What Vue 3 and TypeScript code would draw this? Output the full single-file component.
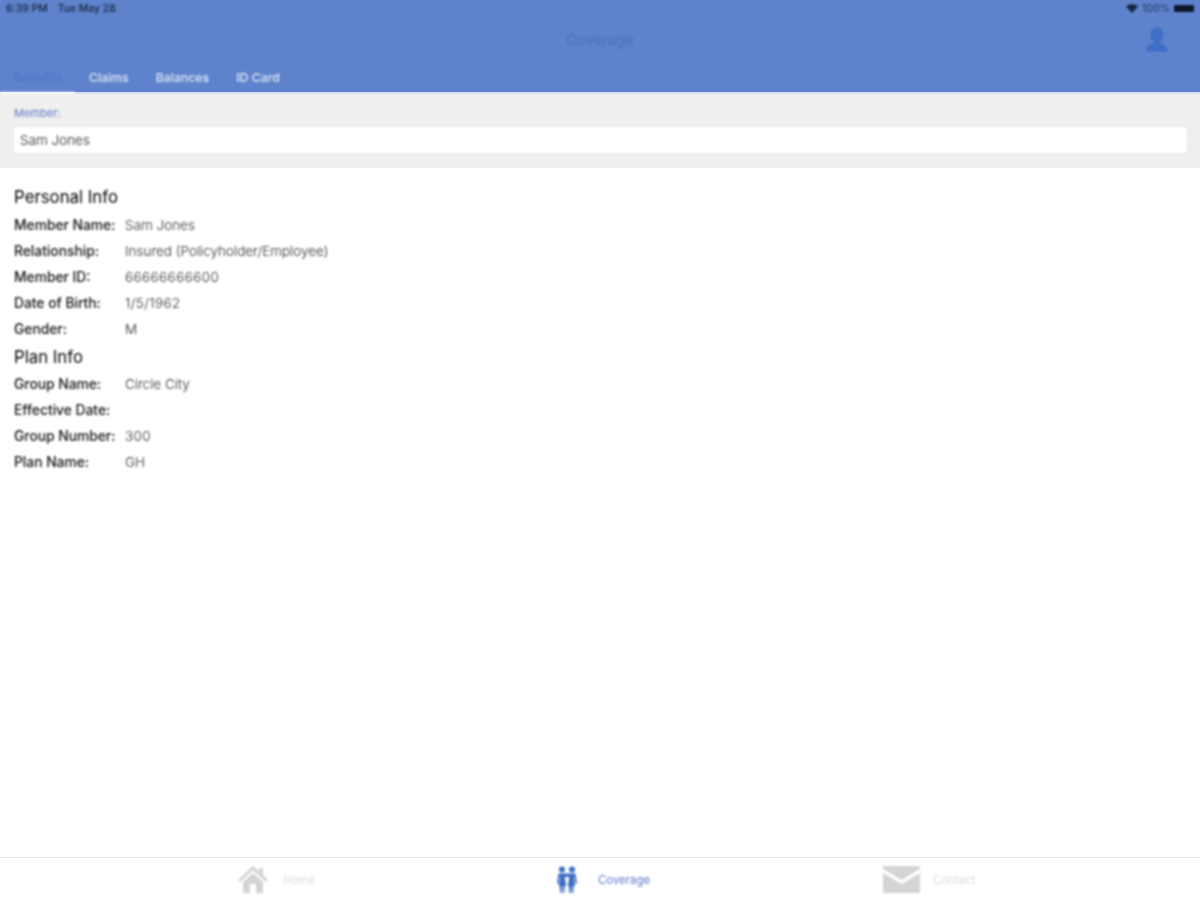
<script setup lang="ts">
interface Row { label: string; value: string; numeric?: boolean }
interface Section { title: string; rows: Row[] }

const tabs: string[] = ['Benefits', 'Claims', 'Balances', 'ID Card']
const sections: Section[] = [
  {
    title: 'Personal Info',
    rows: [
      { label: 'Member Name:', value: 'Sam Jones' },
      { label: 'Relationship:', value: 'Insured (Policyholder/Employee)' },
      { label: 'Member ID:', value: '66666666600', numeric: true },
      { label: 'Date of Birth:', value: '1/5/1962', numeric: true },
      { label: 'Gender:', value: 'M' }
    ]
  },
  {
    title: 'Plan Info',
    rows: [
      { label: 'Group Name:', value: 'Circle City' },
      { label: 'Effective Date:', value: '' },
      { label: 'Group Number:', value: '300', numeric: true },
      { label: 'Plan Name:', value: 'GH' }
    ]
  }
]
</script>

<template>
  <div class="page">
    <header class="header">
      <div class="status soft">
        <div class="status-left"><span>6:39 PM</span><span>Tue May 28</span></div>
        <div class="status-right">
          <svg width="12" height="9" viewBox="0 0 12 9"><path d="M0 2.600C3.400-.5 8.600-.5 12 2.600L6 9z" fill="#16243f" /></svg>
          <span>100%</span>
          <span class="battery"></span>
        </div>
      </div>
      <div class="titlebar">
        <span class="title soft">Coverage</span>
        <svg class="person soft" width="24" height="27" viewBox="0 0 26 28">
          <ellipse cx="13" cy="9" rx="7" ry="8.500" fill="#3f6ec6" />
          <path d="M1.500 27c0-6 4-8 8.500-9.500h6c4.500 1.500 8.500 3.500 8.500 9.500z" fill="#3f6ec6" />
        </svg>
      </div>
      <nav class="tabs">
        <span v-for="(tab, i) in tabs" :key="tab" class="tab soft" :class="{ active: i === 0 }">{{ tab }}</span>
      </nav>
    </header>

    <section class="member">
      <label class="member-label soft">Member:</label>
      <div class="member-input soft">Sam Jones</div>
    </section>

    <main class="content soft">
      <div v-for="section in sections" :key="section.title" class="info">
        <h2 class="section-title">{{ section.title }}</h2>
        <div v-for="row in section.rows" :key="row.label" class="row">
          <span class="row-label">{{ row.label }}</span>
          <span class="row-value" :class="{ numeric: row.numeric }">{{ row.value }}</span>
        </div>
      </div>
    </main>

    <footer class="tabbar">
      <div class="tabbar-item home soft">
        <svg width="30" height="27" viewBox="0 0 30 27">
          <path fill="#d4d4d4" d="M15 0 21 5V2h4v7l5 5-2 2L15 4 2 16l-2-2zM5 16 15 7l10 9v11h-7v-9h-6v9H5z" />
        </svg>
        <span class="tabbar-label">Home</span>
      </div>
      <div class="tabbar-item current soft">
        <svg width="20" height="27" viewBox="0 0 20 27">
          <g fill="#3c6cc4">
            <circle cx="5" cy="3.500" r="3" />
            <circle cx="15" cy="3.500" r="3" />
            <path d="M1.500 7.500h17L20 17.500h-1.800L17.200 11h-.7L18 20h-1.300l-.5 7h-1.400l-.3-7h-.5l-.3 7h-1.400l-.5-7H10.800L12.300 11H7.700L9.200 20H7.800l-.5 7H5.900l-.3-7h-.7l-.3 7H3.200l-.5-7H1.800L3.300 11h-.6L1.800 17.500H0z" />
          </g>
        </svg>
        <span class="tabbar-label">Coverage</span>
      </div>
      <div class="tabbar-item contact soft">
        <svg width="37" height="27" viewBox="0 0 37 27">
          <path fill="#d4d4d4" d="M0 0h37v3L18.500 14 0 3zM0 7l18.500 11L37 7v20H0z" />
        </svg>
        <span class="tabbar-label">Contact</span>
      </div>
    </footer>
  </div>
</template>

<style scoped>
.page {
  width: 1200px;
  height: 900px;
  display: flex;
  flex-direction: column;
  background: #ffffff;
  overflow: hidden;
  font-family: Inter, "Liberation Sans", sans-serif;
}
.soft { filter: blur(0.8px); }
.header {
  height: 94px;
  box-sizing: border-box;
  background: #5e83cc;
  border-bottom: 2px solid #d5dff2;
  display: flex;
  flex-direction: column;
  flex: none;
}
.status {
  height: 16px;
  padding: 0 6px;
  display: flex;
  justify-content: space-between;
  align-items: center;
  font-size: 10.400px;
  font-weight: 500;
  color: #16243f;
}
.status-left { display: flex; gap: 10px; }
.status-right { display: flex; align-items: center; gap: 4px; color: #2c4372; }
.battery { width: 20px; height: 7px; background: #0c1528; border-radius: 1px; }
.titlebar {
  height: 48px;
  padding: 0 31px 0 0;
  display: flex;
  align-items: center;
  justify-content: flex-end;
  position: relative;
}
.title {
  position: absolute;
  left: 0;
  right: 0;
  text-align: center;
  font-size: 14.600px;
  font-weight: 500;
  color: #4d72bf;
}
.person { margin-top: -1px; }
.tabs { display: flex; height: 28px; }
.tab {
  padding: 0 13.500px;
  line-height: 27px;
  font-size: 12.300px;
  font-weight: 500;
  color: #e2e9f7;
}
.tab.active {
  padding: 0 13px 0 14px;
  color: #4f76c6;
  position: relative;
}
.tab.active::after {
  content: "";
  position: absolute;
  left: 0;
  right: 0;
  bottom: -2px;
  height: 2px;
  background: #ffffff;
}
.member {
  height: 74px;
  box-sizing: border-box;
  flex: none;
  background: #efefef;
  padding: 12px 12px 0 13px;
}
.member-label {
  display: block;
  padding-left: 1px;
  font-size: 11px;
  line-height: 14px;
  color: #5a78c8;
  margin-bottom: 6px;
}
.member-input {
  height: 28px;
  box-sizing: border-box;
  background: #ffffff;
  border: 1px solid #e6e6e6;
  padding: 0 6px;
  line-height: 26px;
  font-size: 13.500px;
  font-weight: 300;
  color: #1a1a1a;
}
.content {
  flex: 1;
  padding: 17px 14px 0;
  display: flex;
  flex-direction: column;
  gap: 2px;
}
.section-title {
  margin: 0;
  height: 27px;
  font-size: 16.800px;
  line-height: 24px;
  font-weight: 400;
  color: #000000;
}
.info + .info .section-title { line-height: 26px; }
.row {
  display: flex;
  height: 26px;
  align-items: center;
}
.row-label {
  width: 111px;
  flex: none;
  font-size: 13.800px;
  font-weight: 500;
  color: #111111;
}
.row-value {
  font-size: 13.500px;
  font-weight: 300;
  color: #2c2c2c;
}
.row-value.numeric { letter-spacing: 0.4px; }
.tabbar {
  height: 43px;
  box-sizing: border-box;
  flex: none;
  border-top: 1px solid #e6e6e6;
  padding: 1px 0 0 7px;
  display: grid;
  grid-template-columns: repeat(3, 327px);
  justify-content: center;
  align-items: center;
}
.tabbar-item {
  display: flex;
  align-items: center;
  justify-content: center;
  gap: 16px;
}
.tabbar-item.current { gap: 21px; }
.tabbar-item.contact { gap: 13px; padding-right: 3px; }
.tabbar-label {
  font-size: 11.400px;
  color: #dcdcdc;
}
.current .tabbar-label { color: #5a78c8; }
</style>
